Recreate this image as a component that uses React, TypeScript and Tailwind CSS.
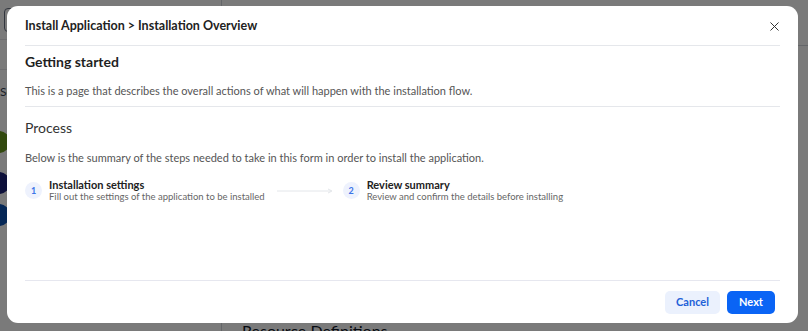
import { X } from "lucide-react";

const steps = [
  { n: 1, title: "Installation settings", text: "Fill out the settings of the application to be installed" },
  { n: 2, title: "Review summary", text: "Review and confirm the details before installing" },
];

export default function App() {
  return (
    <div className="relative w-[808px] h-[331px] overflow-hidden bg-white font-['Lato',sans-serif]">
      {/* Page behind the dialog */}
      <div className="flex h-full">
        <div className="w-[222px] border-r border-gray-300 flex flex-col">
          <div className="h-[40px] border-b border-gray-200 flex items-center px-1">
            <div className="w-5 h-6 rounded border border-gray-500" />
          </div>
          <div className="h-[30px] border-b border-gray-200" />
          <div className="pt-[14px] text-xs text-gray-700">Scope</div>
          <div className="flex flex-col mt-[31px] -ml-[12px]">
            <div className="w-[22px] h-[22px] rounded-full bg-[#6a9a1f]" />
            <div className="w-[22px] h-[22px] rounded-full bg-[#1d237a] mt-[19px]" />
            <div className="w-[22px] h-[22px] rounded-full bg-[#0b52b5] mt-[10px]" />
          </div>
        </div>
        <div className="flex-1 flex flex-col">
          <div className="h-[46px] border-b border-gray-300" />
          <div className="flex-1" />
          <div className="pl-5 text-base text-gray-900 leading-none h-[8px] overflow-hidden">Resource Definitions</div>
        </div>
      </div>

      {/* Overlay */}
      <div className="absolute inset-0 bg-[#000000]/[0.52]" />

      {/* Dialog */}
      <div className="absolute left-[7px] top-[6px] w-[791px] h-[317px] bg-white rounded-[11px] flex flex-col px-[18px]">
        <div className="h-[40px] flex items-center justify-between border-b border-[#e5e7eb] pt-[2px]">
          <h2 className="text-[12.5px] font-bold text-[#222]">Install Application &gt; Installation Overview</h2>
          <button className="text-[#333] -mr-[2px]">
            <X size={15} strokeWidth={1.6} />
          </button>
        </div>

        <div className="pt-[5px] pb-[8px] border-b border-[#e5e7eb]">
          <h3 className="text-[14px] font-bold text-[#1f1f1f] leading-[22px]">Getting started</h3>
          <p className="mt-[11px] text-[11px] text-[#555] leading-[14px]">
            This is a page that describes the overall actions of what will happen with the installation flow.
          </p>
        </div>

        <div className="flex-1 pt-[11px]">
          <h3 className="text-[14px] text-[#333] leading-[20px]">Process</h3>
          <p className="mt-[13px] text-[11px] text-[#555] leading-[14px]">
            Below is the summary of the steps needed to take in this form in order to install the application.
          </p>
          <div className="mt-[13px] flex items-center">
            {steps.map((s, i) => (
              <div key={s.n} className="flex items-center">
                <div className="flex items-center gap-[7px]">
                  <div className="w-[17px] h-[17px] rounded-full bg-[#eef2fd] text-[#3b74e8] text-[9px] font-bold flex items-center justify-center">
                    {s.n}
                  </div>
                  <div className="flex flex-col">
                    <span className="text-[11px] font-bold text-[#222] leading-[13px]">{s.title}</span>
                    <span className="text-[9.5px] text-[#666] leading-[12px]">{s.text}</span>
                  </div>
                </div>
                {i < steps.length - 1 && (
                  <svg width="56" height="6" viewBox="0 0 56 6" className="ml-[12px] mr-[10px]">
                    <line x1="0" y1="3" x2="54" y2="3" stroke="#e3e6ea" strokeWidth="1" />
                    <path d="M51 1 L55 3 L51 5" fill="none" stroke="#e3e6ea" strokeWidth="1" />
                  </svg>
                )}
              </div>
            ))}
          </div>
        </div>

        <div className="h-[43px] border-t border-[#e6e7ef] flex items-center justify-end gap-[7px] pr-[5px]">
          <button className="h-[23px] w-[55px] rounded-[5px] bg-[#ebf1fd] text-[#2160d8] text-[11px] font-bold">Cancel</button>
          <button className="h-[23px] w-[48px] rounded-[5px] bg-[#0a64f5] text-white text-[11px] font-bold">Next</button>
        </div>
      </div>
    </div>
  );
}
